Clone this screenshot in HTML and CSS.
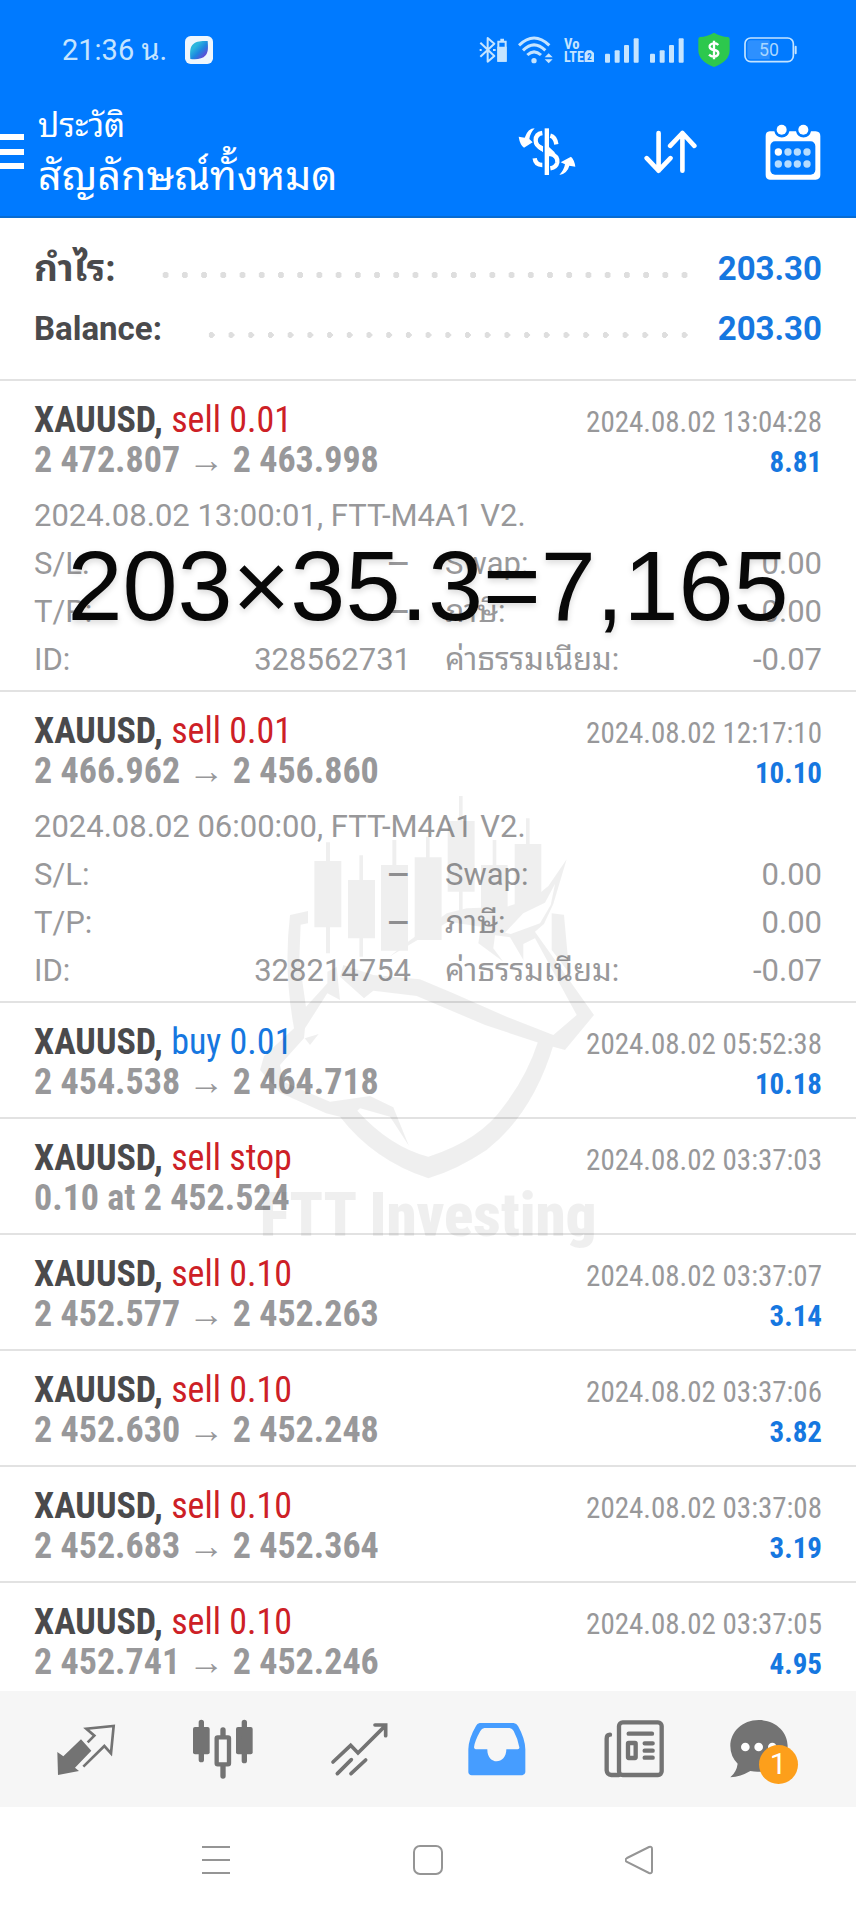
FILE: index.html
```html
<!DOCTYPE html>
<html lang="th">
<head>
<meta charset="utf-8">
<meta name="viewport" content="width=device-width, initial-scale=1">
<title>ประวัติ</title>
<link rel="stylesheet" href="styles.css">
</head>
<body>
<div class="app">
  <header class="header">
    <div class="status">
      <span class="clock">21:36 น.</span>
      <svg class="app-badge" width="28" height="28" viewBox="0 0 84 84" aria-hidden="true">
        <defs><linearGradient id="leaf" x1="0" y1="0" x2="1" y2="1"><stop offset="0.3" stop-color="#2bb5dd"/><stop offset="0.55" stop-color="#1d86e0"/><stop offset="0.8" stop-color="#5a4fd6"/></linearGradient></defs>
        <rect width="84" height="84" rx="17" fill="#eef6fd"/>
        <path d="M68 15C50 14 32 15 22 27C14 37 15 52 16 69C34 71 52 70 62 58C71 47 69 32 68 15Z" fill="url(#leaf)"/>
      </svg>
      <div class="status-icons" aria-hidden="true">
        <svg width="28" height="28" viewBox="0 0 84 84" fill="none" stroke="#c5e4ff" stroke-width="6">
          <path d="M4 20L46 60L26 77V6L46 23L4 62M2 42H8M42 42H50" stroke-linejoin="round"/>
          <path d="M58 17H80V74H58ZM64 11H75" /><path d="M58 35H80V74H58Z" fill="#c5e4ff"/>
        </svg>
        <svg width="35" height="28" viewBox="0 0 105 84" fill="none" stroke="#c5e4ff" stroke-width="9">
          <path d="M3 28Q48 -16 94 28M15 43Q48 10 82 43M28 57Q48 38 69 57"/>
          <circle cx="48" cy="74" r="8" fill="#c5e4ff" stroke="none"/>
          <path d="M80 64L92 52L104 64ZM80 70H104L92 82Z" fill="#c5e4ff" stroke="none"/>
        </svg>
        <svg class="volte-icon" width="30" height="28" viewBox="0 0 90 84" fill="#c5e4ff">
          <text class="volte" x="0" y="38" font-size="44">Vo</text>
          <text class="volte" x="0" y="78" font-size="42">LTE</text>
          <path d="M69 43H81L90 51V78H62V51Z"/>
          <text class="volte" x="69" y="73" font-size="28" fill="#007aff">2</text>
        </svg>
        <svg width="34" height="26" viewBox="0 0 102 78" fill="#c5e4ff"><rect x="0" y="50" width="15" height="27" rx="3"/><rect x="29" y="40" width="15" height="37" rx="3"/><rect x="57" y="24" width="15" height="53" rx="3"/><rect x="86" y="4" width="15" height="73" rx="3"/></svg>
        <svg width="34" height="26" viewBox="0 0 102 78" fill="#c5e4ff"><rect x="0" y="50" width="15" height="27" rx="3"/><rect x="29" y="40" width="15" height="37" rx="3"/><rect x="57" y="24" width="15" height="53" rx="3"/><rect x="86" y="4" width="15" height="73" rx="3"/></svg>
        <svg class="shield" width="32" height="36" viewBox="0 0 96 108">
          <path d="M48 2Q68 14 90 15Q95 16 95 22V55Q95 88 48 105Q1 88 1 55V22Q1 16 6 15Q28 14 48 2Z" fill="#2dc84d"/>
          <path d="M61 39Q55 33 46 34Q34 36 35 45Q36 52 48 54Q61 56 61 64Q60 73 48 74Q39 74 33 68M48 26V82" fill="none" stroke="#fff" stroke-width="7"/>
        </svg>
        <svg width="53" height="26" viewBox="0 0 159 78">
          <rect x="3" y="3" width="145" height="71" rx="17" fill="none" stroke="#c5e4ff" stroke-width="5"/>
          <path d="M20 10H77V67H20Q10 67 10 57V20Q10 10 20 10Z" fill="#2d90ff"/>
          <rect x="152" y="26" width="6" height="26" rx="3" fill="#c5e4ff"/>
          <text class="battery" x="75" y="57" font-size="53" text-anchor="middle" fill="#a9d6ff">50</text>
        </svg>
      </div>
    </div>
    <div class="toolbar">
      <button class="icon-btn" aria-label="เมนู"><svg width="24" height="36" viewBox="0 0 24 36" fill="#fff"><path d="M0 0H24V6H0ZM0 15H24V21H0ZM0 29H24V35H0Z"/></svg></button>
      <div class="titles">
        <p class="subtitle">ประวัติ</p>
        <h1 class="title">สัญลักษณ์ทั้งหมด</h1>
      </div>
      <div class="actions">
        <button class="icon-btn" aria-label="สกุลเงิน"><svg width="58" height="50" viewBox="270 380 174 150">
          <path d="M320 384Q300 384 290 412L272 409Q276 434 288 442L314 426L304 416Q306 399 320 384ZM394 524Q418 520 424 496L442 499Q439 478 429 469L398 486L411 492Q408 509 394 524Z" fill="#fff"/>
          <path d="M343 398Q323 401 323 420Q323 437 343 446M343 494Q322 494 320 474M367 406Q382 410 385 432M367 460Q390 467 388 486Q385 501 367 504" fill="none" stroke="#fff" stroke-width="13"/>
          <path d="M350 384H363V524H350Z" fill="#fff"/><path d="M363 440L380 456V468H363ZM331 430L345 438V456L330 444Z" fill="#fff"/>
        </svg></button>
        <button class="icon-btn" aria-label="เรียงลำดับ"><svg width="53" height="44" viewBox="648 388 160 133" fill="none" stroke="#fff" stroke-width="14" stroke-linecap="round" stroke-linejoin="round"><path d="M692 397V511M656 473L692 511L728 473M764 511V397M727 436L764 397L800 436"/></svg></button>
        <button class="icon-btn" aria-label="ปฏิทิน"><svg width="56" height="56" viewBox="1012 367 168 168">
          <path d="M1026 389H1040A23 23 0 0 0 1085 389H1105A23 23 0 0 0 1150 389H1164Q1178 390 1178 403V520Q1178 533 1164 534H1026Q1014 533 1014 520V403Q1014 390 1026 389Z" fill="#fff"/>
          <rect x="1028" y="419" width="135" height="100" rx="14" fill="#007aff"/>
          <g fill="#fff"><circle cx="1062" cy="384" r="15"/><circle cx="1127" cy="384" r="15"/><circle cx="1052" cy="451" r="11"/></g>
          <g fill="#b5dcff"><circle cx="1081" cy="451" r="11"/><circle cx="1109" cy="451" r="11"/><circle cx="1138" cy="451" r="11"/><circle cx="1052" cy="487" r="11"/><circle cx="1081" cy="487" r="11"/><circle cx="1109" cy="487" r="11"/><circle cx="1138" cy="487" r="11"/></g>
        </svg></button>
      </div>
    </div>
  </header>

  <main class="content">
    <dl class="summary">
      <div class="sum-row"><dt class="thai-label">กำไร:</dt><dd class="dots"></dd><dd class="sum-value">203.30</dd></div>
      <div class="sum-row"><dt>Balance:</dt><dd class="dots"></dd><dd class="sum-value">203.30</dd></div>
    </dl>

    <ul class="deals">
      <li class="deal expanded">
        <div class="line"><h2 class="symbol">XAUUSD, <span class="sell">sell 0.01</span></h2><time class="time">2024.08.02 13:04:28</time></div>
        <div class="line"><span class="price">2 472.807 <span class="arrow">→</span> 2 463.998</span><span class="profit">8.81</span></div>
        <div class="detail">
          <p class="comment">2024.08.02 13:00:01, FTT-M4A1 V2.</p>
          <dl class="facts">
            <div><dt>S/L:</dt><dd class="none">–</dd></div><div><dt>Swap:</dt><dd>0.00</dd></div>
            <div><dt>T/P:</dt><dd class="none">–</dd></div><div><dt>ภาษี:</dt><dd>0.00</dd></div>
            <div><dt>ID:</dt><dd>328562731</dd></div><div><dt>ค่าธรรมเนียม:</dt><dd>-0.07</dd></div>
          </dl>
        </div>
      </li>
      <li class="deal expanded">
        <div class="line"><h2 class="symbol">XAUUSD, <span class="sell">sell 0.01</span></h2><time class="time">2024.08.02 12:17:10</time></div>
        <div class="line"><span class="price">2 466.962 <span class="arrow">→</span> 2 456.860</span><span class="profit">10.10</span></div>
        <div class="detail">
          <p class="comment">2024.08.02 06:00:00, FTT-M4A1 V2.</p>
          <dl class="facts">
            <div><dt>S/L:</dt><dd class="none">–</dd></div><div><dt>Swap:</dt><dd>0.00</dd></div>
            <div><dt>T/P:</dt><dd class="none">–</dd></div><div><dt>ภาษี:</dt><dd>0.00</dd></div>
            <div><dt>ID:</dt><dd>328214754</dd></div><div><dt>ค่าธรรมเนียม:</dt><dd>-0.07</dd></div>
          </dl>
        </div>
      </li>
      <li class="deal">
        <div class="line"><h2 class="symbol">XAUUSD, <span class="buy">buy 0.01</span></h2><time class="time">2024.08.02 05:52:38</time></div>
        <div class="line"><span class="price">2 454.538 <span class="arrow">→</span> 2 464.718</span><span class="profit">10.18</span></div>
      </li>
      <li class="deal">
        <div class="line"><h2 class="symbol">XAUUSD, <span class="sell">sell stop</span></h2><time class="time">2024.08.02 03:37:03</time></div>
        <div class="line"><span class="price">0.10 at 2 452.524</span></div>
      </li>
      <li class="deal">
        <div class="line"><h2 class="symbol">XAUUSD, <span class="sell">sell 0.10</span></h2><time class="time">2024.08.02 03:37:07</time></div>
        <div class="line"><span class="price">2 452.577 <span class="arrow">→</span> 2 452.263</span><span class="profit">3.14</span></div>
      </li>
      <li class="deal">
        <div class="line"><h2 class="symbol">XAUUSD, <span class="sell">sell 0.10</span></h2><time class="time">2024.08.02 03:37:06</time></div>
        <div class="line"><span class="price">2 452.630 <span class="arrow">→</span> 2 452.248</span><span class="profit">3.82</span></div>
      </li>
      <li class="deal">
        <div class="line"><h2 class="symbol">XAUUSD, <span class="sell">sell 0.10</span></h2><time class="time">2024.08.02 03:37:08</time></div>
        <div class="line"><span class="price">2 452.683 <span class="arrow">→</span> 2 452.364</span><span class="profit">3.19</span></div>
      </li>
      <li class="deal">
        <div class="line"><h2 class="symbol">XAUUSD, <span class="sell">sell 0.10</span></h2><time class="time">2024.08.02 03:37:05</time></div>
        <div class="line"><span class="price">2 452.741 <span class="arrow">→</span> 2 452.246</span><span class="profit">4.95</span></div>
      </li>
    </ul>

    <svg class="watermark" width="380" height="480" viewBox="0 0 1140 1440" role="img" aria-label="FTT Investing">
      <mask id="horn" maskUnits="userSpaceOnUse" x="0" y="0" width="1140" height="1440">
        <rect width="1140" height="1440" fill="#fff"/>
        <path d="M945 312L932 375L900 430L812 462L795 458L850 400L915 368Z" fill="#000"/>
      </mask>
      <g opacity="0.06" mask="url(#horn)">
        <path d="M223 243H258V187H270V243H304V442H270V520H258V442H223ZM324 300H358V226H369V300H405V475H369V530H358V475H324ZM423 255H457V180H469V255H504V512H423ZM524 232H558V170H569V232H605V480H524ZM623 123H657V48H668V123H704V335H668V400H657V335H623ZM723 255H758V180H769V255H803V400H723ZM824 192H858V115H869V192H904V380H824Z"/>
        <path d="M448 530L500 488L620 400L680 385L800 380L880 355L925 318L980 238L940 372L912 432L885 455L1062 705L975 810L900 790L735 735L530 648L400 632L372 655L300 590L310 555L400 585L540 598L640 640L800 710L940 765L1010 705L885 475L850 492L850 540L810 472L765 466L760 505L790 545L715 490L722 440L625 425Z"/>
        <path d="M150 405L204 393V430L182 434L178 540L198 680L262 610V575L290 560L300 660L262 640L195 745L192 775L120 855L130 905L270 965L390 948L460 982L507 1098L450 1010L360 985L352 992Q450 1100 565 1130Q720 1080 790 980Q860 890 895 782L942 790Q880 1000 740 1110Q650 1170 565 1195Q400 1140 300 1010L258 1000L120 938L60 870L72 828L162 745Q130 570 150 405ZM194 775L236 762L210 795ZM935 400L972 404L988 580L935 510Z"/>
        <text class="brand" x="60" y="1367" font-size="182">FTT Investing</text>
      </g>
    </svg>
    <p class="note">203×35.3=7,165</p>
  </main>

  <nav class="tabs">
    <button class="icon-btn" aria-label="ราคา"><svg width="60" height="60" viewBox="172 83 180 180"><path d="M247 144L278 178L229 229L241 239L178 251L176 182L194 195Z" fill="#737373"/><path d="M267 153L287 133L263 112L345 104L337 186L317 164L254 226" fill="none" stroke="#737373" stroke-width="8"/></svg></button>
    <button class="icon-btn" aria-label="กราฟ"><svg width="60" height="60" viewBox="580 86 180 180" fill="#737373"><rect x="580" y="110" width="50" height="82" rx="6"/><rect x="709" y="110" width="50" height="82" rx="6"/><path d="M605 96V208M734 96V211M670 119V138M670 226V257" stroke="#737373" stroke-width="16" stroke-linecap="round"/><rect x="651" y="141" width="37" height="81" rx="3" fill="none" stroke="#737373" stroke-width="13"/></svg></button>
    <button class="icon-btn" aria-label="เทรด"><svg width="60" height="60" viewBox="990 83 180 180" fill="none" stroke="#737373" stroke-width="11" stroke-linecap="round"><path d="M999 212L1052 162L1074 185L1157 102M1125 101H1157V133M1012 247L1054 205M1053 247L1097 206"/></svg></button>
    <button class="icon-btn" aria-label="ประวัติ" aria-current="page"><svg width="60" height="60" viewBox="116 83 180 180"><path d="M154 95H256Q265 96 269 104Q290 141 291 174V243Q290 251 282 252H130Q121 251 120 243V174Q121 141 143 104Q146 96 154 95ZM168 110Q160 111 156 119Q139 149 137 168Q137 173 142 174H177C176 222 234 222 234 174H268Q274 173 273 168Q269 143 256 119Q252 111 244 110Z" fill="#469dff" fill-rule="evenodd"/></svg></button>
    <button class="icon-btn" aria-label="ข่าว"><svg width="60" height="60" viewBox="528 84 180 180" fill="none" stroke="#737373" stroke-width="13" stroke-linecap="round"><path d="M546 131Q536 131 536 143V238Q537 251 550 252H573"/><rect x="573" y="94" width="128" height="158" rx="11"/><path d="M602 128H672M650 157H674M650 179H674M650 200H674"/><rect x="600" y="156" width="23" height="45" rx="2"/></svg></button>
    <button class="icon-btn chat" aria-label="ข้อความ 1"><svg width="60" height="60" viewBox="905 84 180 180"><path d="M994 87C1045 87 1081 123 1081 165C1081 210 1030 253 969 240Q940 257 909 259Q928 242 931 218Q909 196 909 165C909 123 945 87 994 87Z" fill="#737373"/><g fill="#fff"><circle cx="954" cy="168" r="13"/><circle cx="994" cy="168" r="13"/><circle cx="1035" cy="168" r="13"/></g></svg><span class="badge">1</span></button>
  </nav>
  <nav class="system">
    <button class="icon-btn" aria-label="ล่าสุด"><svg width="30" height="30" viewBox="0 0 30 30" stroke="#959595" stroke-width="2"><path d="M1 2H29M1 15H29M1 28H29"/></svg></button>
    <button class="icon-btn" aria-label="หน้าหลัก"><svg width="30" height="30" viewBox="0 0 30 30" fill="none" stroke="#959595" stroke-width="2"><rect x="1" y="1" width="28" height="28" rx="6"/></svg></button>
    <button class="icon-btn" aria-label="ย้อนกลับ"><svg width="30" height="30" viewBox="0 0 30 30" fill="none" stroke="#959595" stroke-width="2"><path d="M2 13L24 2Q27 1 27 4V26Q27 29 24 28L2 17Q-1 15 2 13Z"/></svg></button>
  </nav>
</div>
</body>
</html>
```

FILE: styles.css
```css
* { box-sizing: border-box; }
body, h1, h2, p, dl, dd, ul { margin: 0; padding: 0; }
body {
  font-family: Roboto, "Noto Sans Thai Looped", "Noto Looped Thai", Waree, Loma, Garuda, "Noto Sans Thai", "Noto Sans", sans-serif;
  color: #4a4a4c;
  background: #fff;
}
svg { display: block; }
.app { display: flex; flex-direction: column; height: 100vh; overflow: hidden; }
.icon-btn { padding: 0; border: 0; background: none; position: relative; display: block; }

.header { flex: none; background: #007aff; color: #fff; border-bottom: 2px solid #086cd2; }
.status { display: flex; align-items: center; height: 100px; padding: 0 59px 0 62px; }
.clock { font-size: 29px; line-height: 40px; color: #c5e4ff; }
.app-badge { margin-left: 18px; }
.status-icons { display: flex; align-items: center; gap: 11px; margin-left: auto; }
.shield { margin: 0 3px; }
.volte-icon { overflow: visible; }
.volte { font-family: "Roboto Condensed", Roboto, sans-serif; font-weight: 700; }
.battery { font-family: Roboto, sans-serif; }
.toolbar { display: flex; align-items: center; height: 116px; padding: 0 35px 12px 0; }
.titles { margin-left: 14px; flex: 1; }
.subtitle { font-size: 33px; line-height: 48px; }
.title { font-size: 41px; line-height: 52px; font-weight: 400; }
.actions { display: flex; align-items: center; gap: 68px; }

.content { position: relative; flex: 1; min-height: 0; overflow: hidden; }
.summary { padding: 21px 34px 20px; }
.sum-row { display: flex; align-items: center; height: 60px; font-size: 33px; line-height: 60px; font-weight: 700; }
.thai-label { font-size: 37px; }
.dots {
  flex: 1;
  height: 6px;
  margin: 12px 24px 0 40px;
  background: radial-gradient(circle, #dedede 0 3px, transparent 3px) 0 0 / 19px 6px;
  background-repeat: space no-repeat;
}
.sum-value { color: #1677e0; }

.deals { list-style: none; }
.deal { padding: 19px 34px 15px; border-top: 2px solid #e2e2e2; }
.deal.expanded { padding-bottom: 6px; }
.line { display: flex; justify-content: space-between; align-items: baseline; height: 40px; line-height: 40px; white-space: nowrap; }
.symbol, .price, .time, .profit { font-family: "Roboto Condensed", Roboto, sans-serif; }
.symbol { font-size: 36px; font-weight: 700; }
.symbol span { font-weight: 400; }
.sell { color: #cd2026; }
.buy { color: #1677e0; }
.time { font-size: 29px; color: #98989a; }
.price { font-size: 36px; font-weight: 700; color: #98989a; }
.arrow { font-size: 36px; }
.profit { font-size: 29px; font-weight: 700; color: #1677e0; }
.detail { padding-top: 12px; font-size: 31px; line-height: 48px; color: #98989a; }
.facts { display: grid; grid-template-columns: 377fr 377fr; column-gap: 34px; }
.facts div { display: flex; justify-content: space-between; height: 48px; }
.none { font-size: 38px; }

.watermark { position: absolute; top: 562px; left: 50%; margin-left: -188px; pointer-events: none; }
.brand { font-family: "Roboto Condensed", Roboto, sans-serif; font-weight: 900; }
.note {
  position: absolute;
  top: 310px;
  left: 0;
  right: 0;
  text-align: center;
  font: 99px/116px "Liberation Sans", Arial, sans-serif;
  color: #080808;
  text-shadow: 0 3px 6px rgba(0, 0, 0, 0.15);
  pointer-events: none;
}

.tabs { flex: none; display: grid; grid-template-columns: repeat(6, 1fr); align-items: center; justify-items: center; height: 116px; padding: 0 17px 0 18px; background: #f6f6f6; }
.chat { padding-right: 24px; }
.badge {
  position: absolute;
  left: 30px;
  top: 26px;
  width: 39px;
  height: 39px;
  border-radius: 50%;
  background: #fd9f1b;
  color: #fff;
  font: 30px/38px Roboto, sans-serif;
  text-align: center;
}
.system { flex: none; display: grid; grid-template-columns: repeat(3, 1fr); align-items: center; justify-items: center; height: 105px; padding: 0 110px; }
```
